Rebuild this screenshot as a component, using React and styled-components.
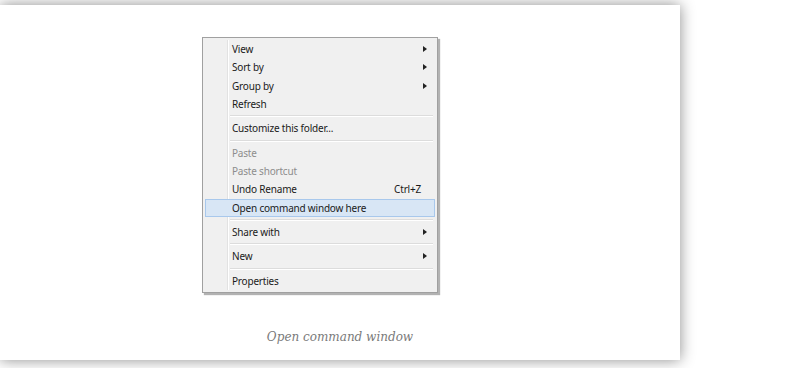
import React from 'react';
import styled, { createGlobalStyle } from 'styled-components';

const Global = createGlobalStyle`
  html, body { margin:0; padding:0; background:#fff; }
  body { width:810px; height:368px; overflow:hidden; }
`;

const Page = styled.div`
  padding-top:5px;
  height:368px;
  box-sizing:border-box;
`;

const Card = styled.section`
  width:680px;
  height:355px;
  background:#fff;
  box-shadow:0 0 14px rgba(0,0,0,0.45);
  display:flex;
  flex-direction:column;
  align-items:center;
  box-sizing:border-box;
  padding-top:32px;
`;

const Shot = styled.div`
  width:276px;
  height:262px;
  display:flex;
`;

const Menu = styled.div`
  width:236px;
  height:256px;
  box-sizing:border-box;
  background:#f0f0f0;
  border:1px solid #a0a0a0;
  box-shadow:2px 2px 1px rgba(0,0,0,0.3);
  padding:2px;
  position:relative;
  font-family:"Noto Sans", "Open Sans", sans-serif;
  font-size:10px;
  letter-spacing:-0.2px;
  color:#1a1a1a;
  &::before {
    content:"";
    position:absolute;
    top:2px; bottom:2px; left:24px;
    border-left:1px solid #e2e2e2;
    border-right:1px solid #fff;
  }
`;

const Item = styled.div`
  height:18.33px;
  display:flex;
  align-items:center;
  padding-left:26px;
  padding-right:7px;
  box-sizing:border-box;
  position:relative;
  color:${p => (p.$disabled ? '#8d8d8d' : '#1a1a1a')};
  background:${p => (p.$active ? '#d8e6f5' : 'transparent')};
  border:1px solid ${p => (p.$active ? '#a8c8ec' : 'transparent')};
`;

const Label = styled.span`
  flex:1;
`;

const Shortcut = styled.span`
  margin-right:6px;
`;

const Arrow = styled.span`
  width:0; height:0;
  border-top:3px solid transparent;
  border-bottom:3px solid transparent;
  border-left:4px solid #222;
`;

const Sep = styled.div`
  height:1px;
  margin:2px 2px 2px 25px;
  background:#dcdcdc;
  border-bottom:1px solid #fff;
`;

const Caption = styled.p`
  margin:31px 0 0 0;
  font-family:"DejaVu Serif", serif;
  font-style:italic;
  font-size:12px;
  color:#7a7a7a;
`;

const menu = [
  { label: 'View', sub: true },
  { label: 'Sort by', sub: true },
  { label: 'Group by', sub: true },
  { label: 'Refresh' },
  'sep',
  { label: 'Customize this folder...' },
  'sep',
  { label: 'Paste', disabled: true },
  { label: 'Paste shortcut', disabled: true },
  { label: 'Undo Rename', key: 'Ctrl+Z' },
  { label: 'Open command window here', active: true },
  'sep',
  { label: 'Share with', sub: true },
  'sep',
  { label: 'New', sub: true },
  'sep',
  { label: 'Properties' },
];

export default function App() {
  return (
    <>
      <Global />
      <Page>
        <Card>
          <Shot>
            <Menu>
              {menu.map((m, i) =>
                m === 'sep' ? (
                  <Sep key={i} />
                ) : (
                  <Item key={i} $disabled={m.disabled} $active={m.active}>
                    <Label>{m.label}</Label>
                    {m.key && <Shortcut>{m.key}</Shortcut>}
                    {m.sub && <Arrow />}
                  </Item>
                )
              )}
            </Menu>
          </Shot>
          <Caption>Open command window</Caption>
        </Card>
      </Page>
    </>
  );
}
